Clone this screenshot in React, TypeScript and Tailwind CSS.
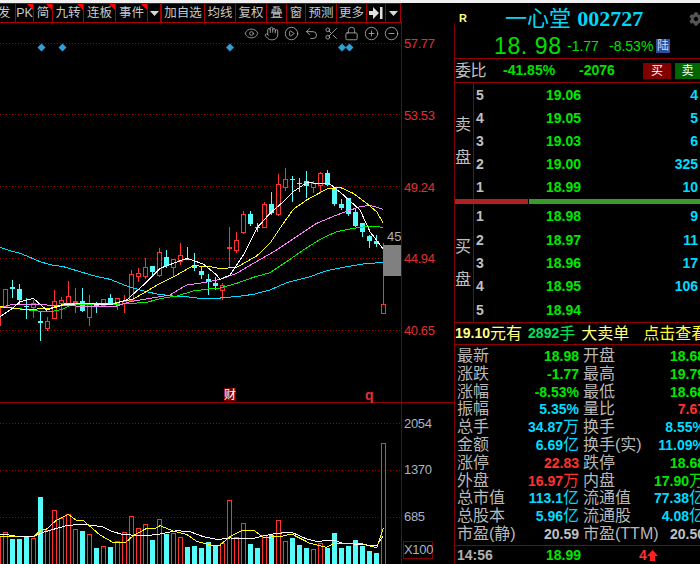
import { CircleMinus, CirclePlay, CirclePlus, Eye, Hand, Lock, Scissors, Undo2 } from "lucide-react";
import { FaCog } from "react-icons/fa";
import type { ReactNode } from "react";

// all chart numbers were read off 3x crops, so they are divided by 3 below
type Candle = [number, number, number, number, 0 | 1];

const candles: Candle[] = [
  [430, 445, 495, 495, 1], [388, 388, 440, 440, 1], [360, 381, 387, 415, 0], [372, 388, 422, 435, 0],
  [415, 437, 441, 477, 0], [420, 430, 441, 473, 1], [455, 484, 491, 543, 0], [472, 484, 506, 513, 1],
  [390, 424, 476, 477, 1], [412, 421, 429, 477, 1], [363, 409, 430, 435, 1], [384, 424, 427, 460, 1],
  [384, 424, 453, 456, 0], [405, 430, 473, 498, 1], [427, 435, 440, 459, 0], [417, 417, 435, 440, 1],
  [403, 414, 430, 435, 0], [415, 415, 430, 450, 1], [405, 422, 428, 459, 1], [330, 343, 420, 420, 1],
  [324, 340, 350, 366, 1], [294, 322, 350, 357, 1], [318, 318, 336, 352, 0], [264, 277, 347, 350, 1],
  [270, 292, 320, 325, 0], [297, 297, 320, 350, 1], [250, 286, 305, 315, 1], [262, 296, 298, 300, 0],
  [280, 316, 326, 332, 0], [318, 333, 345, 357, 0], [342, 357, 365, 405, 0], [350, 369, 378, 390, 0],
  [370, 376, 392, 420, 1], [201, 262, 266, 325, 1], [216, 241, 272, 280, 1], [153, 163, 216, 222, 1],
  [153, 163, 192, 197, 0], [188, 200, 202, 215, 0], [125, 133, 201, 205, 1], [96, 132, 160, 165, 0],
  [42, 73, 164, 167, 1], [24, 57, 80, 93, 1], [48, 58, 62, 125, 0], [55, 69, 72, 95, 0],
  [33, 64, 78, 114, 0], [62, 70, 82, 98, 1], [35, 40, 76, 100, 1], [30, 40, 76, 78, 0],
  [80, 85, 133, 137, 0], [118, 132, 144, 149, 0], [113, 115, 163, 168, 0], [145, 156, 198, 200, 0],
  [188, 190, 218, 230, 0], [225, 228, 243, 263, 0], [224, 243, 252, 262, 0], [250, 433, 461, 461, 1],
];

// y of the top of each volume bar in page pixels
const volumes = [
  537, 532, 539, 539, 537, 538, 497, 530, 510, 518, 514, 529, 531, 534, 548, 546, 547, 541, 532, 516,
  528, 524, 540, 519, 534, 533, 537, 547, 546, 548, 542, 546, 543, 500, 537, 523, 544, 548, 535, 535,
  520, 541, 538, 545, 548, 549, 543, 548, 533, 548, 546, 540, 546, 551, 553, 443,
];

const left = (x: number, y: number) => `${x / 3},${160 + y / 3}`;
const right = (x: number, y: number) => `${220 + x / 3},${160 + y / 3}`;
const volLeft = (x: number, y: number) => `${x / 3},${400 + y / 3}`;
const volRight = (x: number, y: number) => `${220 + x / 3},${380 + y / 3}`;

const pts = (fn: (x: number, y: number) => string, list: number[][]) => list.map(([x, y]) => fn(x, y)).join(" ");

const lines = [
  {
    color: "#00e0ff",
    points:
      pts(left, [[0, 262], [30, 272], [60, 280], [90, 292], [120, 305], [150, 314], [190, 320], [240, 335], [280, 347], [330, 358], [380, 378], [420, 390], [470, 402], [520, 408], [560, 410], [600, 415], [660, 415]]) +
      " " +
      pts(right, [[0, 413], [50, 410], [100, 403], [150, 390], [200, 368], [270, 350], [320, 332], [380, 320], [430, 312], [490, 307]]),
  },
  {
    color: "#00f000",
    points:
      pts(left, [[0, 441], [50, 445], [100, 452], [150, 456], [190, 447], [220, 432], [270, 432], [330, 435], [380, 431], [440, 427], [480, 416], [530, 408], [580, 393], [640, 385], [660, 384]]) +
      " " +
      pts(right, [[0, 384], [50, 370], [100, 352], [150, 338], [200, 305], [250, 270], [300, 238], [350, 215], [400, 205], [450, 198], [490, 202]]),
  },
  {
    color: "#ff80ff",
    points:
      pts(left, [[0, 443], [35, 434], [100, 433], [160, 436], [210, 437], [260, 440], [340, 441], [390, 425], [450, 415], [510, 405], [560, 375], [610, 368], [660, 358]]) +
      " " +
      pts(right, [[0, 358], [50, 340], [100, 310], [170, 270], [230, 230], [290, 190], [350, 165], [420, 140], [450, 136], [490, 148]]),
  },
  {
    color: "#ffff00",
    points:
      pts(left, [[0, 440], [60, 447], [110, 447], [150, 445], [200, 430], [260, 430], [340, 430], [400, 417], [430, 400], [480, 370], [530, 345], [580, 317], [630, 320], [660, 326]]) +
      " " +
      pts(right, [[0, 326], [50, 322], [110, 288], [150, 250], [190, 190], [220, 148], [260, 120], [320, 87], [360, 82], [400, 100], [440, 130], [470, 155], [490, 190]]),
  },
  {
    color: "#ffffff",
    points:
      pts(left, [[0, 470], [35, 447], [60, 425], [100, 415], [140, 450], [190, 435], [250, 430], [330, 435], [380, 420], [430, 375], [480, 325], [520, 310], [560, 295], [610, 312], [650, 345], [660, 358]]) +
      " " +
      pts(right, [[0, 358], [30, 345], [70, 285], [110, 205], [150, 160], [190, 125], [220, 95], [260, 68], [330, 72], [370, 105], [420, 150], [450, 215], [490, 268]]),
  },
];

const volLines = [
  {
    color: "#ffffff",
    points:
      pts(volLeft, [[0, 405], [20, 404], [50, 409], [100, 410], [130, 397], [160, 388], [200, 377], [240, 373], [280, 376], [310, 381], [335, 394], [370, 404], [440, 407], [480, 402], [530, 392], [570, 395], [610, 410], [650, 418], [660, 418]]) +
      " " +
      pts(volRight, [[0, 478], [30, 474], [100, 475], [130, 468], [170, 460], [215, 457], [260, 477], [290, 484], [340, 481], [370, 490], [420, 493], [470, 498], [490, 467]]),
  },
  {
    color: "#ffff00",
    points:
      pts(volLeft, [[0, 410], [50, 411], [100, 411], [125, 388], [140, 387], [170, 360], [205, 343], [230, 362], [250, 362], [300, 405], [340, 428], [375, 429], [400, 407], [440, 385], [470, 384], [480, 377], [520, 393], [560, 403], [590, 424], [640, 437], [660, 437]]) +
      " " +
      pts(volRight, [[0, 495], [30, 470], [70, 450], [100, 450], [130, 472], [180, 470], [215, 462], [270, 490], [320, 502], [340, 492], [420, 490], [470, 503], [490, 445]]),
  },
];

const RED = "#ff3232";
const CYAN = "#54fcfc";

function Chart() {
  return (
    <svg className="block h-[541px] w-[401px]" viewBox="0 23 401 541">
      {[43.5, 114.5, 186.5, 258.5, 330.5, 423.5, 470.5, 517.5].map((y) => (
        <line key={y} x1="0" x2="401" y1={y} y2={y} stroke="#a00000" strokeDasharray="1 2" />
      ))}
      {[41.5, 62.5, 230, 342, 349.5].map((x) => (
        <polygon key={x} points={`${x - 4},47.5 ${x},43.5 ${x + 4},47.5 ${x},51.5`} fill="#2e9fd8" />
      ))}
      <g shapeRendering="crispEdges">
        {candles.map(([wt, bt, bb, wb, up], i) => {
          const x = 7 * i - 2;
          const color = up ? RED : CYAN;
          const top = Math.round(160 + bt / 3);
          const h = Math.max(Math.round((bb - bt) / 3), 1);
          const wickTop = 160 + wt / 3;
          const wickBottom = 160 + wb / 3;
          return (
            <g key={i}>
              <rect x={x} y={wickTop} width="1" height={top - wickTop} fill={color} />
              <rect x={x} y={top + h} width="1" height={Math.max(wickBottom - top - h, 0)} fill={color} />
              {up ? (
                <rect x={x - 1.5} y={top + 0.5} width="4" height={h} fill="#000" stroke={color} />
              ) : (
                <rect x={x - 2} y={top} width="5" height={h} fill={color} />
              )}
            </g>
          );
        })}
        <rect x="383" y="245" width="18" height="31" fill="#808080" />
        {volumes.map((y, i) => {
          const x = 7 * i - 2;
          return candles[i][4] ? (
            <rect key={i} x={x - 1.5} y={y + 0.5} width="4" height={564 - y} fill="#000" stroke={RED} />
          ) : (
            <rect key={i} x={x - 2} y={y} width="5" height={564 - y} fill={CYAN} />
          );
        })}
        <rect x="0" y="402" width="401" height="1" fill="#900000" />
        {lines.map((l) => (
          <polyline key={l.color} points={l.points} fill="none" stroke={l.color} strokeWidth="1" />
        ))}
        {volLines.map((l) => (
          <polyline key={l.color} points={l.points} fill="none" stroke={l.color} strokeWidth="1" />
        ))}
      </g>
    </svg>
  );
}

function Tab({ w, label, mark, children }: { w: string; label?: string; mark?: boolean; children?: ReactNode }) {
  return (
    <div className={`relative flex h-full shrink-0 items-center justify-center overflow-hidden border-r border-[#a80000] ${w}`}>
      {label}
      {children}
      {mark && <span className="absolute right-0 top-0 size-[6px] bg-[#ff0000] [clip-path:polygon(0_0,100%_0,100%_100%)]" />}
    </div>
  );
}

const Caret = () => (
  <svg width="9" height="5" viewBox="0 0 9 5">
    <polygon points="0,0 9,0 4.5,5" fill="#d8d8d8" />
  </svg>
);

function Toolbar() {
  return (
    <div className="flex h-5 w-[402px] items-center border-y border-[#a80000] text-[12.5px] text-[#c8c8c8]">
      <Tab w="w-[16px]"><span className="-ml-[7px]">发</span></Tab>
      <Tab w="w-[18px]" label="PK" mark />
      <Tab w="w-[19px]" label="简" mark />
      <Tab w="w-[31px]" label="九转" mark />
      <Tab w="w-[32px]" label="连板" mark />
      <Tab w="w-[32px]" label="事件" mark />
      <Tab w="w-[14px] border-r-2"><Caret /></Tab>
      <Tab w="w-[43px]" label="加自选" />
      <Tab w="w-[31px]" label="均线" />
      <Tab w="w-[31px]" label="复权" />
      <Tab w="w-[20px]" label="叠" />
      <Tab w="w-[19px]" label="窗" />
      <Tab w="w-[31px]" label="预测" />
      <Tab w="w-[30px]" label="更多" />
      <Tab w="w-[19px]">
        <svg width="14" height="12" viewBox="0 0 14 12">
          <path d="M0 4h4V0l6 6-6 6V8H0z M11 0h2.5v12H11z" fill="#e0e0e0" />
        </svg>
      </Tab>
      <Tab w="w-[15px]"><Caret /></Tab>
    </div>
  );
}

function ChartTools() {
  const icons = [Eye, Hand, CirclePlay, Undo2, Scissors, Lock, CirclePlus, CircleMinus];
  return (
    <div className="absolute left-[241px] top-0 flex h-5 text-[#a8a8a8]">
      {icons.map((Icon, i) => (
        <span key={i} className="flex w-5 items-center justify-center">
          <Icon size={15} strokeWidth={1.4} />
        </span>
      ))}
    </div>
  );
}

function Axis() {
  return (
    <div className="flex h-[541px] w-[54px] flex-col border-x border-[#800000]">
      <div className="flex h-[380px] flex-col gap-[55.75px] border-b border-[#900000] pl-[2px] pt-[13px] text-[13px] leading-4 tracking-[-0.4px] text-[#e03030]">
        {["57.77", "53.53", "49.24", "44.94", "40.65"].map((v) => (
          <div key={v}>{v}</div>
        ))}
      </div>
      <div className="flex flex-1 flex-col gap-[30.75px] pl-[2px] pt-[12.5px] text-[13px] leading-4 tracking-[-0.3px] text-[#a8b4c4]">
        {["2054", "1370", "685"].map((v) => (
          <div key={v}>{v}</div>
        ))}
        <div className="-mt-[15px] ml-[-1px] w-[30px] border border-[#800000] text-center">X100</div>
      </div>
    </div>
  );
}

function Level({ n, price, vol }: { n: number; price: string; vol?: number }) {
  return (
    <div className="flex items-center text-[14px] font-bold">
      <span className="w-[28px] pl-[2px] text-[#c0c0c0]">{n}</span>
      <span className="ml-[44px] w-[35px] text-[#00e800]">{price}</span>
      <span className="flex-1 pr-[2px] text-right text-[#00dcff]">{vol}</span>
    </div>
  );
}

function Book({ side, rows, className }: { side: string; rows: [number, string, number?][]; className: string }) {
  return (
    <div className={`flex ${className}`}>
      <div className="flex w-[19px] shrink-0 flex-col items-center justify-center gap-[17px] border-r border-[#900000] pr-[2px] text-[16px] leading-4 text-[#c0c0c0]">
        <span>{side}</span>
        <span>盘</span>
      </div>
      <div className="grid flex-1 auto-rows-fr pt-px">
        {rows.map(([n, price, vol]) => (
          <Level key={n} n={n} price={price} vol={vol} />
        ))}
      </div>
    </div>
  );
}

const G = "text-[#00e800]";
const C = "text-[#00dcff]";
const R = "text-[#ff3232]";
const W = "text-[#c0c0c0]";

type Cell = [string, string, string, string?];

const stats: [Cell, Cell][] = [
  [["最新", "18.98", G], ["开盘", "18.68", G]],
  [["涨跌", "-1.77", G], ["最高", "19.79", G]],
  [["涨幅", "-8.53%", G], ["最低", "18.68", G]],
  [["振幅", "5.35%", C], ["量比", "7.67", R]],
  [["总手", "34.87", C, "万"], ["换手", "8.55%", C]],
  [["金额", "6.69", C, "亿"], ["换手(实)", "11.09%", C]],
  [["涨停", "22.83", R], ["跌停", "18.68", G]],
  [["外盘", "16.97", R, "万"], ["内盘", "17.90", G, "万"]],
  [["总市值", "113.1", C, "亿"], ["流通值", "77.38", C, "亿"]],
  [["总股本", "5.96", C, "亿"], ["流通股", "4.08", C, "亿"]],
  [["市盈(静)", "20.59", W], ["市盈(TTM)", "20.50", W]],
];

function StatCell({ cell, className }: { cell: Cell; className: string }) {
  const [label, value, color, unit] = cell;
  return (
    <div className={`flex shrink-0 justify-between ${className}`}>
      <span className="text-[16px] leading-[18px] text-[#b8b8b8]">{label}</span>
      <span className={`whitespace-nowrap text-[14px] leading-[18px] ${color}`}>
        <b>{value}</b>
        {unit && <span className="text-[16px]">{unit}</span>}
      </span>
    </div>
  );
}

function QuotePanel() {
  return (
    <div className="w-[245px] shrink-0 overflow-hidden">
      <div className="flex h-[31px] items-center pl-1">
        <span className="w-[46px] text-[11px] font-bold text-[#ffff80]">R</span>
        <span className="whitespace-nowrap text-[22px] leading-none text-[#00d8f8]">
          一心堂 <span className="[font-family:'Liberation_Serif',serif] font-bold">002727</span>
        </span>
        <FaCog className="ml-auto mr-[-3px] text-[14px] text-[#555555]" />
      </div>
      <div className="flex h-[24px] items-center pl-[39px] text-[#00e000]">
        <span className="w-[73px] whitespace-nowrap text-[23px] leading-none tracking-[0.6px]">18. 98</span>
        <b className="w-[42px] text-[14px] font-normal">-1.77</b>
        <b className="w-[47px] text-[14px] font-normal">-8.53%</b>
        <span className="flex size-[14px] items-center justify-center bg-[#2b4f9f] text-[12px] leading-none text-[#c8d8ff]">陆</span>
      </div>
      <div className="flex h-[25px] items-center border-y border-[#900000] text-[14px] font-bold text-[#00e000]">
        <span className="w-[48px] text-[16px] font-normal tracking-[-0.5px] text-[#c0c0c0]">委比</span>
        <span className="w-[76px]">-41.85%</span>
        <span className="w-[64px]">-2076</span>
        <span className="flex h-4 w-7 items-center justify-center bg-[#800000] text-[12px] font-normal text-white">买</span>
        <span className="ml-1 flex h-4 w-[25px] items-center justify-center bg-[#006400] text-[12px] font-normal text-white">卖</span>
      </div>
      <Book
        side="卖"
        className="h-[116px]"
        rows={[
          [5, "19.06", 4],
          [4, "19.05", 5],
          [3, "19.03", 6],
          [2, "19.00", 325],
          [1, "18.99", 10],
        ]}
      />
      <div className="flex h-[5px] gap-px">
        <div className="w-[73px] bg-[#b02020]" />
        <div className="flex-1 bg-[#3a9a2a]" />
      </div>
      <Book
        side="买"
        className="h-[118px]"
        rows={[
          [1, "18.98", 9],
          [2, "18.97", 11],
          [3, "18.96", 17],
          [4, "18.95", 106],
          [5, "18.94"],
        ]}
      />
      <div className="flex h-[23px] items-center whitespace-nowrap border-y border-[#900000] text-[16px] text-[#ffff80]">
        <b className="text-[14px]">19.10</b>
        <span>元有</span>
        <b className="ml-[6px] text-[14px] text-[#00e060]">2892</b>
        <span className="text-[#00e060]">手</span>
        <span className="ml-[6px]">大卖单</span>
        <span className="ml-[14px] text-[#ffff30]">点击查看</span>
      </div>
      <div className="w-[250px] pl-[2px] pt-[2px]">
        {stats.map(([a, b]) => (
          <div key={a[0]} className="flex h-[17.8px]">
            <StatCell cell={a} className="w-[122px]" />
            <StatCell cell={b} className="ml-[4px] w-[122px]" />
          </div>
        ))}
      </div>
      <div className="mt-[2px] flex h-[21px] items-center border-t border-[#900000] pl-[2px] text-[14px] font-bold">
        <span className="w-[89px] text-[#b0b0b0]">14:56</span>
        <span className={`w-[93px] ${G}`}>18.99</span>
        <span className={R}>4</span>
        <svg width="11" height="11" viewBox="0 0 11 11">
          <polygon points="5.5,0 11,6 8,6 8,11 3,11 3,6 0,6" fill="#ff2020" />
        </svg>
      </div>
    </div>
  );
}

export default function App() {
  return (
    <div className="h-[564px] w-[700px] overflow-hidden bg-black [font-family:'Liberation_Sans','Noto_Sans_CJK_SC',sans-serif]">
      <div className="h-[3px] bg-[#f0f0f0]" />
      <div className="flex h-[561px]">
        <div className="w-[455px] shrink-0">
          <Toolbar />
          <div className="flex">
            <div className="relative">
              <Chart />
              <ChartTools />
              <span className="absolute left-[224px] top-[365px] flex h-[13px] w-3 items-center justify-center bg-[#800000] text-[12px] leading-none text-white">财</span>
              <b className="absolute left-[365px] top-[362px] text-[14px] leading-5 text-[#e03030]">q</b>
              <span className="absolute left-[387px] top-[206px] text-[13px] leading-4 text-[#b0b0b0]">45</span>
            </div>
            <Axis />
          </div>
        </div>
        <QuotePanel />
      </div>
    </div>
  );
}
